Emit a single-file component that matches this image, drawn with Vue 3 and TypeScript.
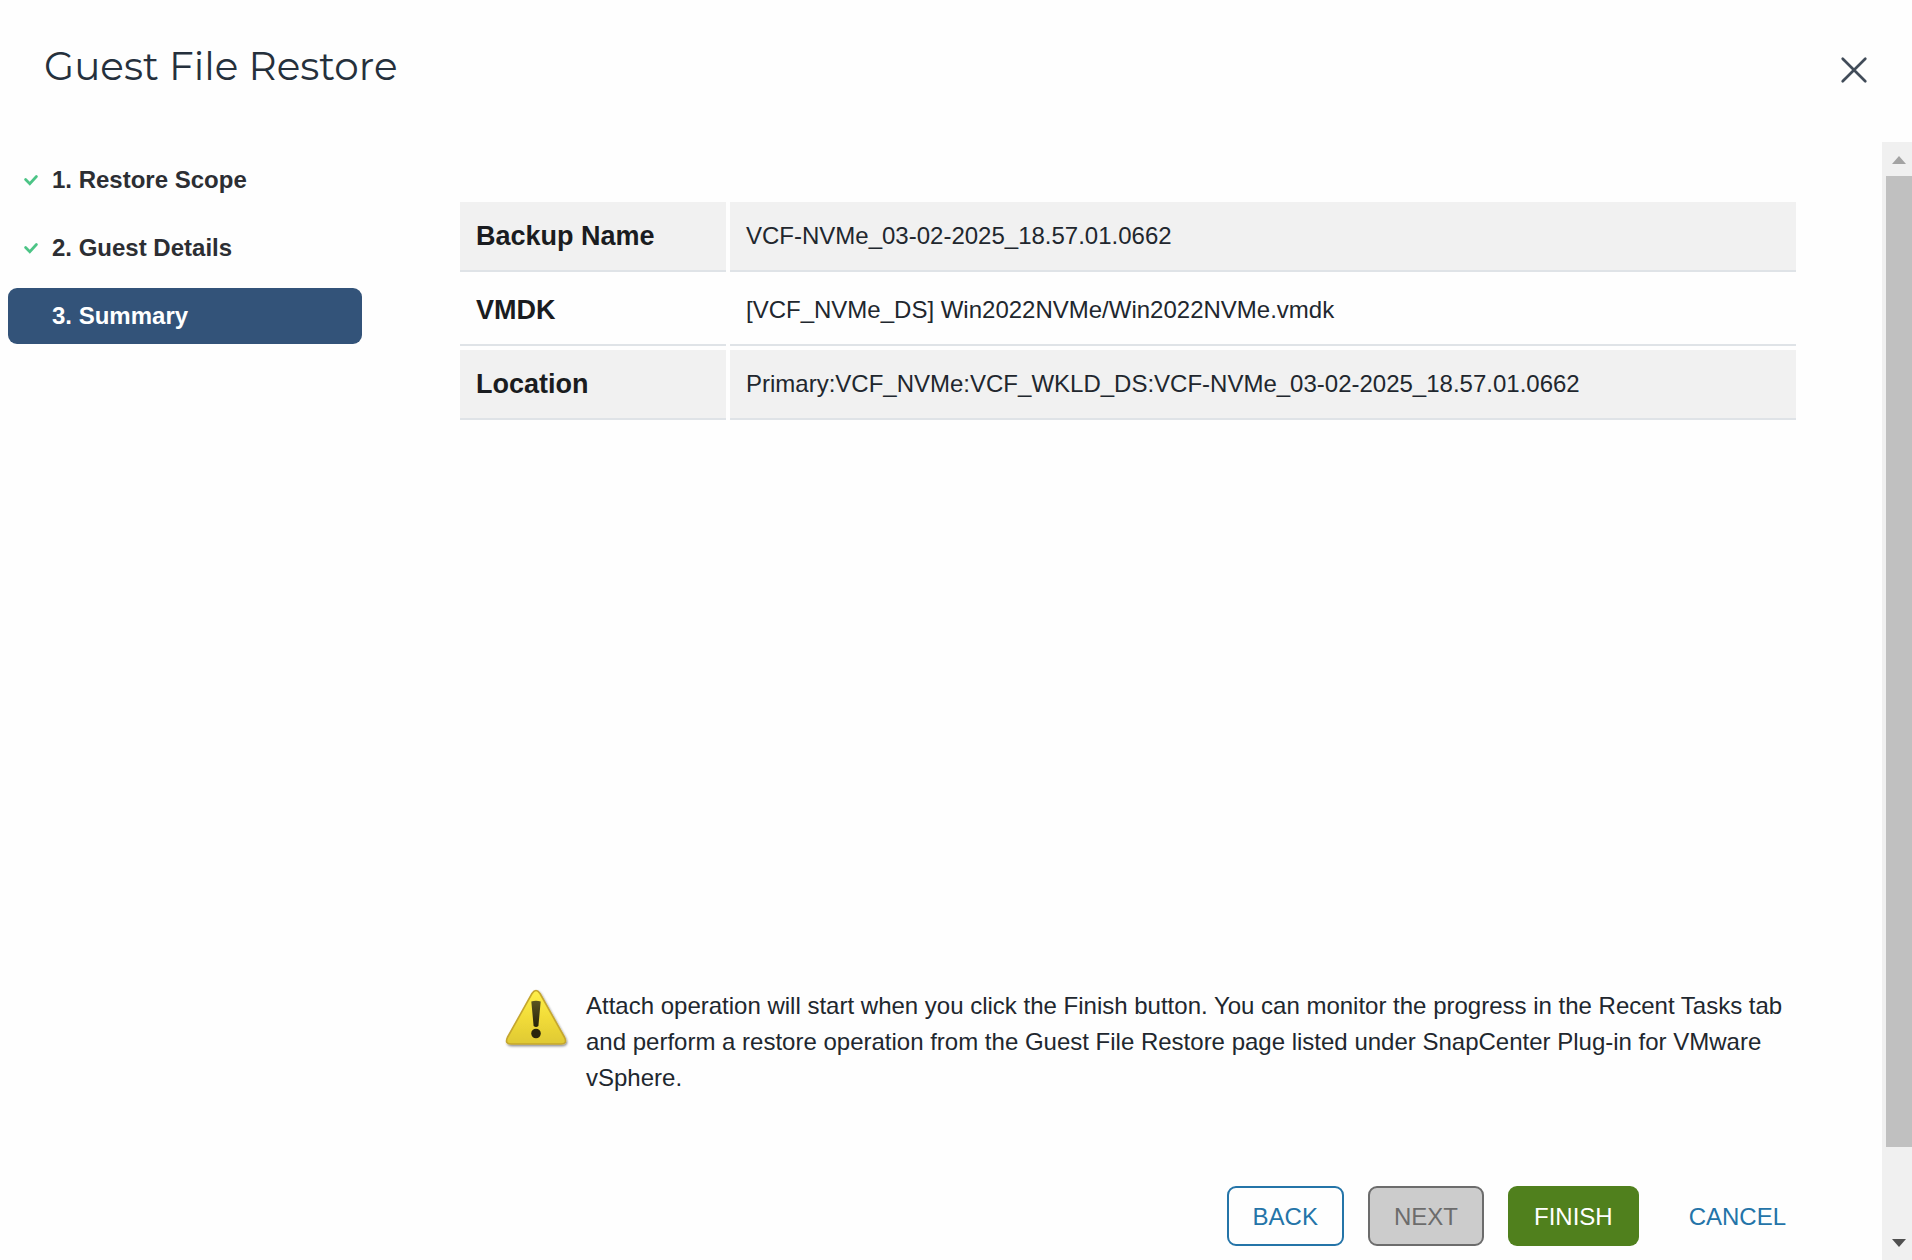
<script setup lang="ts">
interface Step {
  label: string
  done: boolean
  current: boolean
}

interface SummaryRow {
  name: string
  value: string
}

const steps: Step[] = [
  { label: '1. Restore Scope', done: true, current: false },
  { label: '2. Guest Details', done: true, current: false },
  { label: '3. Summary', done: false, current: true },
]

const rows: SummaryRow[] = [
  { name: 'Backup Name', value: 'VCF-NVMe_03-02-2025_18.57.01.0662' },
  { name: 'VMDK', value: '[VCF_NVMe_DS] Win2022NVMe/Win2022NVMe.vmdk' },
  { name: 'Location', value: 'Primary:VCF_NVMe:VCF_WKLD_DS:VCF-NVMe_03-02-2025_18.57.01.0662' },
]
</script>

<template>
  <div class="wizard">
    <header class="header">
      <h1 class="title">Guest File Restore</h1>
      <button class="close" type="button" aria-label="Close">
        <svg width="28" height="28" viewBox="0 0 28 28" aria-hidden="true">
          <path d="M2.7 2.7 25.3 25.3M25.3 2.7 2.7 25.3" fill="none" stroke="#414c59" stroke-width="2.7" stroke-linecap="round" />
        </svg>
      </button>
    </header>

    <div class="body">
      <nav class="steps" aria-label="Wizard steps">
        <button
          v-for="step in steps"
          :key="step.label"
          type="button"
          class="step"
          :class="{ current: step.current }"
          :aria-current="step.current ? 'step' : undefined"
        >
          <span class="mark">
            <svg v-if="step.done" width="16" height="14" viewBox="0 0 16 14" aria-hidden="true">
              <path d="M1.6 6.5 5.8 10.7 12.4 3.5" fill="none" stroke="#4cc486" stroke-width="2.7" stroke-linecap="round" />
            </svg>
          </span>
          <span>{{ step.label }}</span>
        </button>
      </nav>

      <main class="content">
        <table class="summary">
          <tbody>
            <tr v-for="row in rows" :key="row.name">
              <th scope="row">{{ row.name }}</th>
              <td>{{ row.value }}</td>
            </tr>
          </tbody>
        </table>

        <div class="notice">
          <svg class="warning" width="68" height="62" viewBox="0 0 68 62" aria-hidden="true">
            <defs>
              <linearGradient id="warn-fill" x1="0" y1="0" x2="0" y2="1">
                <stop offset="0" stop-color="#fff04a" />
                <stop offset="0.5" stop-color="#f2dc38" />
                <stop offset="1" stop-color="#dfc934" />
              </linearGradient>
              <linearGradient id="warn-mark" x1="0" y1="0" x2="0" y2="1">
                <stop offset="0" stop-color="#5a5420" />
                <stop offset="1" stop-color="#26220a" />
              </linearGradient>
              <filter id="warn-shadow" x="-20%" y="-20%" width="140%" height="140%">
                <feDropShadow dx="1" dy="1.5" stdDeviation="1.2" flood-color="#000" flood-opacity="0.45" />
              </filter>
            </defs>
            <path
              d="M28 5.5Q32 -0.5 36 5.5L60.6 49.5Q63.5 56 57 56H7Q0.5 56 3.4 49.5Z"
              fill="url(#warn-fill)"
              stroke="#c5a62e"
              stroke-width="1.6"
              stroke-linejoin="round"
              filter="url(#warn-shadow)"
            />
            <path d="M27.3 13.5Q32 11.8 36.7 13.5L34.4 38Q32 40 29.6 38Z" fill="url(#warn-mark)" />
            <circle cx="32" cy="45.5" r="4.8" fill="#29250c" />
          </svg>
          <p class="message">
            Attach operation will start when you click the Finish button. You can monitor the progress in the Recent Tasks tab
            and perform a restore operation from the Guest File Restore page listed under SnapCenter Plug-in for VMware vSphere.
          </p>
        </div>

        <footer class="actions">
          <button class="btn outline" type="button">BACK</button>
          <button class="btn disabled" type="button" disabled>NEXT</button>
          <button class="btn primary" type="button">FINISH</button>
          <button class="btn link" type="button">CANCEL</button>
        </footer>
      </main>

      <div class="scrollbar" aria-hidden="true">
        <svg class="arrow" width="14" height="8" viewBox="0 0 14 8"><path d="M7 0 14 8H0Z" fill="#a3a3a3" /></svg>
        <div class="thumb"></div>
        <svg class="arrow" width="14" height="8" viewBox="0 0 14 8"><path d="M7 8 14 0H0Z" fill="#505050" /></svg>
      </div>
    </div>
  </div>
</template>

<style>
body {
  margin: 0;
  background: #fefefe;
}
</style>

<style scoped>
.wizard {
  display: flex;
  flex-direction: column;
  min-height: 100vh;
  box-sizing: border-box;
  background: #fefefe;
  color: #21272e;
  font-family: "Liberation Sans", Arial, sans-serif;
  font-size: 24px;
  line-height: 36px;
}

button {
  font: inherit;
  cursor: pointer;
}

.header {
  display: flex;
  align-items: flex-start;
  justify-content: space-between;
  height: 142px;
  box-sizing: border-box;
  padding: 42px 44px 0 44px;
}

.title {
  margin: 0;
  color: #25303c;
  font-family: Metropolis, Montserrat, Inter, sans-serif;
  font-size: 39px;
  font-weight: 400;
  line-height: 48px;
}

.close {
  display: flex;
  margin-top: 14px;
  padding: 0;
  border: 0;
  background: none;
}

.body {
  display: flex;
  flex: 1;
}

.steps {
  display: flex;
  flex: none;
  flex-direction: column;
  gap: 12px;
  width: 354px;
  padding: 10px 98px 0 8px;
}

.step {
  display: flex;
  align-items: center;
  height: 56px;
  padding: 0;
  border: 0;
  border-radius: 9px;
  background: none;
  color: #2c2e33;
  font-weight: 700;
  text-align: left;
}

.step.current {
  background: #335379;
  color: #fff;
}

.mark {
  display: flex;
  width: 28px;
  padding-left: 16px;
}

.content {
  display: flex;
  flex: 1;
  flex-direction: column;
  min-width: 0;
  padding: 60px 86px 14px 0;
}

.summary {
  width: calc(100% + 8px);
  margin: -4px;
  border-collapse: separate;
  border-spacing: 4px;
}

.summary th,
.summary td {
  height: 70px;
  box-sizing: border-box;
  padding: 0 16px;
  border-bottom: 2px solid #dfe3e7;
  text-align: left;
}

.summary th {
  width: 266px;
  color: #1a1c20;
  font-size: 27px;
  font-weight: 700;
}

.summary tr:nth-child(odd) > * {
  background: #f1f1f1;
}

.notice {
  display: flex;
  align-items: flex-start;
  gap: 14px;
  margin-top: auto;
  padding-left: 44px;
}

.warning {
  flex: none;
}

.message {
  margin: 0;
}

.actions {
  display: flex;
  justify-content: flex-end;
  gap: 24px;
  margin-top: 90px;
}

.btn {
  height: 60px;
  padding: 2px 24px 0;
  border: 2px solid transparent;
  border-radius: 9px;
  background: none;
}

.outline {
  border-color: #2474a8;
  color: #2474a8;
}

.disabled {
  border-color: #6c6c6c;
  background: #cccccc;
  color: #6c6c6c;
  cursor: default;
}

.primary {
  background: #50801d;
  color: #fff;
}

.link {
  margin-left: 16px;
  padding: 2px 8px 0;
  color: #2474a8;
}

.scrollbar {
  display: flex;
  flex: none;
  flex-direction: column;
  align-items: center;
  box-sizing: border-box;
  width: 30px;
  padding: 14px 0 13px 4px;
  background: #f0f0f0;
}

.thumb {
  flex: 1;
  width: 100%;
  margin: 12px 0 92px;
  background: #c0c0c0;
}
</style>
